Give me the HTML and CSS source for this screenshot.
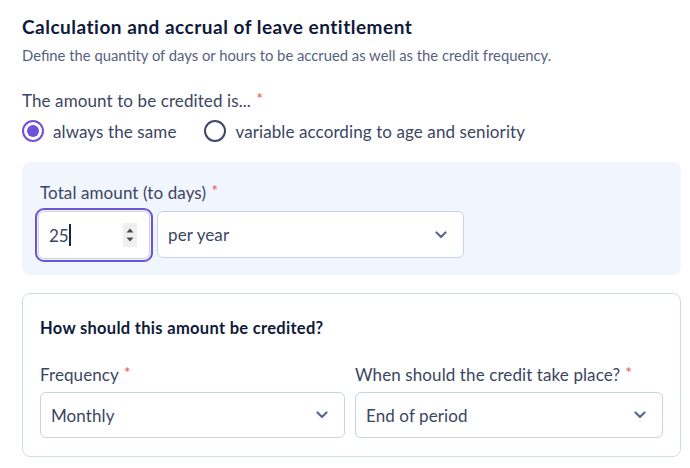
FILE: index.html
```html
<!DOCTYPE html>
<html lang="en">
<head>
<meta charset="utf-8">
<link rel="stylesheet" href="styles.css">
</head>
<body>
<div class="page">
  <h1 class="title">Calculation and accrual of leave entitlement</h1>
  <p class="subtitle">Define the quantity of days or hours to be accrued as well as the credit frequency.</p>

  <div class="field-label q">The amount to be credited is... <span class="req">*</span></div>
  <div class="radios">
    <label class="radio"><span class="dot on"></span>always the same</label>
    <label class="radio"><span class="dot"></span>variable according to age and seniority</label>
  </div>

  <div class="panel">
    <div class="field-label">Total amount (to days) <span class="req">*</span></div>
    <div class="row">
      <div class="num">
        <span class="num-val">25<span class="caret"></span></span>
        <span class="spin">
          <svg width="14" height="24" viewBox="0 0 14 24"><path d="M3.5 9.5 L7 5.5 L10.5 9.5 Z" fill="#4a4a4a"/><path d="M3.5 14.5 L7 18.5 L10.5 14.5 Z" fill="#4a4a4a"/></svg>
        </span>
      </div>
      <div class="select wide">
        <span>per year</span>
        <svg class="chev" width="12" height="8" viewBox="0 0 12 8"><path d="M1.5 1.5 L6 6 L10.5 1.5" fill="none" stroke="#5d6a8c" stroke-width="2.2" stroke-linecap="round" stroke-linejoin="round"/></svg>
      </div>
    </div>
  </div>

  <div class="card">
    <h2 class="card-title">How should this amount be credited?</h2>
    <div class="grid">
      <div class="col">
        <div class="field-label">Frequency <span class="req">*</span></div>
        <div class="select">
          <span>Monthly</span>
          <svg class="chev" width="12" height="8" viewBox="0 0 12 8"><path d="M1.5 1.5 L6 6 L10.5 1.5" fill="none" stroke="#5d6a8c" stroke-width="2.2" stroke-linecap="round" stroke-linejoin="round"/></svg>
        </div>
      </div>
      <div class="col">
        <div class="field-label">When should the credit take place? <span class="req">*</span></div>
        <div class="select">
          <span>End of period</span>
          <svg class="chev" width="12" height="8" viewBox="0 0 12 8"><path d="M1.5 1.5 L6 6 L10.5 1.5" fill="none" stroke="#5d6a8c" stroke-width="2.2" stroke-linecap="round" stroke-linejoin="round"/></svg>
        </div>
      </div>
    </div>
  </div>
</div>
</body>
</html>
```
FILE: styles.css
```css
* { box-sizing: border-box; }
html, body { margin: 0; padding: 0; background: #ffffff; }
body {
  font-family: Lato, "Liberation Sans", sans-serif;
  color: #3a4563;
  width: 690px;
  height: 468px;
  overflow: hidden;
}
.page {
  padding: 16px 9px 0 22px;
}
.title {
  margin: 0;
  font-size: 19px;
  line-height: 22px;
  font-weight: 700;
  letter-spacing: 0.5px;
  color: #0f1a3b;
}
.subtitle {
  margin: 7px 0 0;
  font-size: 14.8px;
  line-height: 20px;
  color: #56627f;
}
.field-label {
  font-size: 17px;
  line-height: 24px;
  letter-spacing: 0.1px;
  color: #3a4563;
}
.field-label.q { margin-top: 24px; }
.req { color: #e5484d; font-size: 15px; vertical-align: top; position: relative; top: -3px; margin-left: 1px; }
.radios {
  display: flex;
  gap: 28px;
  margin-top: 6px;
  height: 24px;
  align-items: center;
}
.radio {
  display: flex;
  align-items: center;
  gap: 9px;
  font-size: 17px;
  letter-spacing: 0.1px;
  color: #3a4563;
}
.dot {
  width: 22px;
  height: 22px;
  border-radius: 50%;
  border: 2px solid #3e4967;
  background: #fff;
  display: inline-block;
  position: relative;
}
.dot.on {
  border-color: #7152d6;
}
.dot.on::after {
  content: "";
  position: absolute;
  left: 3px; top: 3px;
  width: 12px; height: 12px;
  border-radius: 50%;
  background: #7152d6;
}
.panel {
  margin-top: 19px;
  background: #f1f5fd;
  border-radius: 8px;
  padding: 19px 18px 16px 16px;
}
.panel .field-label { padding-left: 2px; }
.row {
  display: flex;
  gap: 7px;
  margin-top: 6px;
}
.num {
  width: 112px;
  height: 48px;
  background: #fff;
  border: 1px solid #c8d2ea;
  border-radius: 6px;
  outline: 2px solid #7152d6;
  outline-offset: 1px;
  display: flex;
  align-items: center;
  justify-content: space-between;
  padding: 0 12px 0 10px;
  font-size: 17px;
  color: #3a4563;
}
.num-val { display: flex; align-items: center; }
.caret {
  display: inline-block;
  width: 2px;
  height: 22px;
  background: #1b2444;
  margin-left: 0;
}
.spin {
  width: 14px;
  height: 24px;
  background: #efefef;
  display: flex;
}
.select {
  height: 47px;
  background: #fff;
  border: 1px solid #c8d2ea;
  border-radius: 6px;
  display: flex;
  align-items: center;
  justify-content: space-between;
  padding: 0 16px 0 10px;
  font-size: 17px;
  letter-spacing: 0.1px;
  color: #3a4563;
}
.select.wide { width: 307px; }
.chev { display: block; }
.card {
  margin-top: 18px;
  border: 1px solid #d2dbee;
  border-radius: 8px;
  padding: 24px 17px 18px 17px;
}
.card-title {
  margin: 0;
  font-size: 16.5px;
  line-height: 20px;
  font-weight: 700;
  letter-spacing: 0.3px;
  color: #0f1a3b;
}
.grid {
  display: grid;
  grid-template-columns: 305px 1fr;
  gap: 10px;
  margin-top: 25px;
}
.col .select { margin-top: 5px; height: 46px; }
```
